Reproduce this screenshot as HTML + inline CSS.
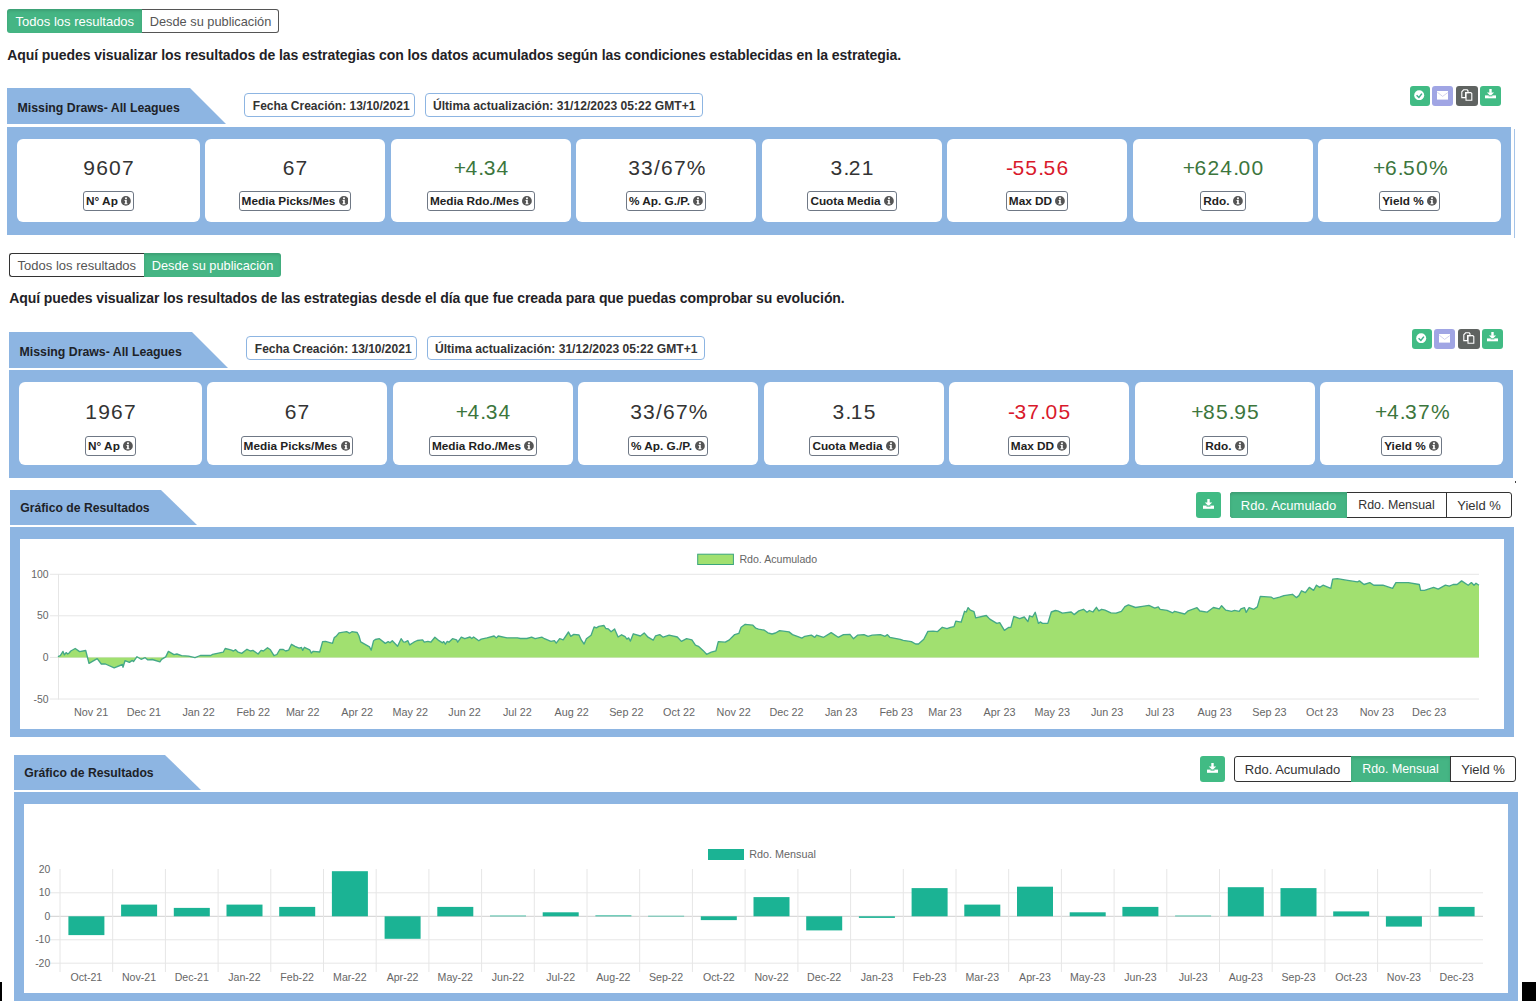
<!DOCTYPE html><html><head><meta charset="utf-8"><style>
html,body{margin:0;padding:0;background:#fff;}
body{width:1536px;height:1001px;overflow:hidden;position:relative;font-family:"Liberation Sans", sans-serif;}
.t{position:absolute;white-space:nowrap;}
.b{position:absolute;}
.lab{position:absolute;text-align:center;height:20px;}
.lab span{display:inline-block;border:1px solid #6f7885;border-radius:3px;height:19.5px;box-sizing:border-box;padding:1px 2px 0 2px;font-size:11.8px;line-height:17.5px;font-weight:700;color:#222;white-space:nowrap;}
.lab i{display:inline-block;width:9.8px;height:9.8px;border-radius:50%;background:#555;vertical-align:-1px;position:relative;}
.lab i:before{content:"";position:absolute;left:4.1px;top:4.1px;width:1.7px;height:3.6px;background:#fff;}
.lab i:after{content:"";position:absolute;left:4.05px;top:1.6px;width:1.8px;height:1.8px;border-radius:50%;background:#fff;}

</style></head><body>
<div class="b" style="left:7px;top:9px;width:135px;height:24px;background:#45b584;border-radius:3px 0 0 3px;box-shadow:inset 0 2px 3px rgba(0,0,0,0.12);"></div>
<div class="b" style="left:142px;top:9px;width:137px;height:24px;background:#fff;border:1px solid #555;border-left:none;border-radius:0 3px 3px 0;box-sizing:border-box;"></div>
<div class="t" style="left:15.60px;top:15.40px;font-size:13px;line-height:13px;font-weight:400;color:#fff;">Todos los resultados</div>
<div class="t" style="left:149.70px;top:15.56px;font-size:12.8px;line-height:12.8px;font-weight:400;color:#555;">Desde su publicación</div>
<div class="t" style="left:7.20px;top:47.65px;font-size:14px;line-height:14px;font-weight:700;color:#1f2226;letter-spacing:-0.07px;">Aquí puedes visualizar los resultados de las estrategias con los datos acumulados según las condiciones establecidas en la estrategia.</div>
<svg class="b" style="left:7px;top:88px" width="219" height="36"><polygon points="0,0 183,0 219,36 0,36" fill="#8db5e2"/></svg>
<div class="t" style="left:17.60px;top:101.59px;font-size:12.3px;line-height:12.3px;font-weight:700;color:#1d2228;">Missing Draws- All Leagues</div>
<div class="b" style="left:244px;top:93px;width:171px;height:24px;border:1px solid #8db5e2;border-radius:4px;box-sizing:border-box;background:#fff;"></div>
<div class="t" style="left:252.80px;top:99.74px;font-size:12px;line-height:12px;font-weight:700;color:#333;">Fecha Creación: 13/10/2021</div>
<div class="b" style="left:425px;top:93px;width:278px;height:24px;border:1px solid #8db5e2;border-radius:4px;box-sizing:border-box;background:#fff;"></div>
<div class="t" style="left:433.00px;top:99.66px;font-size:12.1px;line-height:12.1px;font-weight:700;color:#333;">Última actualización: 31/12/2023 05:22 GMT+1</div>
<div class="b" style="left:1409.6px;top:86px;width:20px;height:20px;background:#41bb84;border-radius:3px;"></div>
<div class="b" style="left:1432.2px;top:86px;width:21px;height:20px;background:#a0a5e4;border-radius:3px;"></div>
<div class="b" style="left:1456.1px;top:86px;width:21.5px;height:20px;background:#5f6361;border-radius:3px;"></div>
<div class="b" style="left:1479.9px;top:86px;width:21px;height:20px;background:#41bb84;border-radius:3px;"></div>
<svg class="b" style="left:1414.4px;top:89.8px" width="10.4" height="10.4" viewBox="0 0 10.4 10.4"><circle cx="5.2" cy="5.2" r="5.0" fill="#fff"/><polyline points="2.6,5.3 4.9,7.5 7.9,3.6" fill="none" stroke="#3fae8a" stroke-width="1.5"/></svg>
<svg class="b" style="left:1436.9px;top:91.2px" width="11.5" height="8.6" viewBox="0 0 11.5 8.6"><rect x="0" y="0" width="11.5" height="8.6" fill="#fff"/><polyline points="0.3,1.2 5.6,5.4 10.8,1.6" fill="none" stroke="#c8c6e8" stroke-width="0.8"/></svg>
<svg class="b" style="left:1461.4px;top:88.8px" width="12" height="12" viewBox="0 0 12 12"><path d="M2.6,0.8 L6.2,0.8 L7,1.8 L7,3.6 L4.6,3.6 L4.6,8.6 L0.8,8.6 L0.8,2.8 Z" fill="none" stroke="#fff" stroke-width="1.1"/><path d="M5,3.6 L9.8,3.6 L10.8,4.6 L10.8,11.3 L5,11.3 Z" fill="none" stroke="#fff" stroke-width="1.1"/></svg>
<svg class="b" style="left:1484.9px;top:89.3px" width="11" height="10" viewBox="0 0 11 10"><rect x="4.3" y="0" width="2.4" height="3.8" fill="#fff"/><polygon points="1.9,3.4 9.1,3.4 5.5,6.9" fill="#fff"/><rect x="0" y="6.4" width="11" height="2.9" fill="#fff"/><rect x="3.6" y="6.4" width="3.8" height="0.9" fill="#41bb84"/></svg>
<div class="b" style="left:7px;top:127px;width:1504px;height:108px;background:#8db5e2;"></div>
<div class="b" style="left:17px;top:139px;width:183px;height:83px;background:#fff;border-radius:6px;"></div>
<div class="t" style="left:28.50px;top:156.82px;font-size:21px;line-height:21px;font-weight:400;color:#333;width:160px;text-align:center;letter-spacing:1.2px;text-indent:1.2px;">9607</div>
<div class="lab" style="left:28.5px;top:191px;width:160px;"><span>N° Ap <svg width="9.8" height="9.8" viewBox="0 0 10 10" style="vertical-align:-1px"><circle cx="5" cy="5" r="5" fill="#555"/><circle cx="5.1" cy="2.4" r="1.05" fill="#fff"/><path d="M3.6,4.1 H5.9 V7.4 H6.6 V8.4 H3.5 V7.4 H4.2 V5.0 H3.6 Z" fill="#fff"/></svg></span></div>
<div class="b" style="left:205px;top:139px;width:180px;height:83px;background:#fff;border-radius:6px;"></div>
<div class="t" style="left:215.00px;top:156.82px;font-size:21px;line-height:21px;font-weight:400;color:#333;width:160px;text-align:center;letter-spacing:1.2px;text-indent:1.2px;">67</div>
<div class="lab" style="left:215.0px;top:191px;width:160px;"><span>Media Picks/Mes <svg width="9.8" height="9.8" viewBox="0 0 10 10" style="vertical-align:-1px"><circle cx="5" cy="5" r="5" fill="#555"/><circle cx="5.1" cy="2.4" r="1.05" fill="#fff"/><path d="M3.6,4.1 H5.9 V7.4 H6.6 V8.4 H3.5 V7.4 H4.2 V5.0 H3.6 Z" fill="#fff"/></svg></span></div>
<div class="b" style="left:391px;top:139px;width:180px;height:83px;background:#fff;border-radius:6px;"></div>
<div class="t" style="left:401.00px;top:156.82px;font-size:21px;line-height:21px;font-weight:400;color:#3c763d;width:160px;text-align:center;letter-spacing:1.2px;text-indent:1.2px;"><span style="letter-spacing:-0.5px">+</span>4<span style="letter-spacing:-0.5px">.</span>34</div>
<div class="lab" style="left:401.0px;top:191px;width:160px;"><span>Media Rdo./Mes <svg width="9.8" height="9.8" viewBox="0 0 10 10" style="vertical-align:-1px"><circle cx="5" cy="5" r="5" fill="#555"/><circle cx="5.1" cy="2.4" r="1.05" fill="#fff"/><path d="M3.6,4.1 H5.9 V7.4 H6.6 V8.4 H3.5 V7.4 H4.2 V5.0 H3.6 Z" fill="#fff"/></svg></span></div>
<div class="b" style="left:576px;top:139px;width:180px;height:83px;background:#fff;border-radius:6px;"></div>
<div class="t" style="left:586.00px;top:156.82px;font-size:21px;line-height:21px;font-weight:400;color:#333;width:160px;text-align:center;letter-spacing:1.2px;text-indent:1.2px;">33/67<span style="letter-spacing:-0.5px">%</span></div>
<div class="lab" style="left:586.0px;top:191px;width:160px;"><span>% Ap. G./P. <svg width="9.8" height="9.8" viewBox="0 0 10 10" style="vertical-align:-1px"><circle cx="5" cy="5" r="5" fill="#555"/><circle cx="5.1" cy="2.4" r="1.05" fill="#fff"/><path d="M3.6,4.1 H5.9 V7.4 H6.6 V8.4 H3.5 V7.4 H4.2 V5.0 H3.6 Z" fill="#fff"/></svg></span></div>
<div class="b" style="left:762px;top:139px;width:180px;height:83px;background:#fff;border-radius:6px;"></div>
<div class="t" style="left:772.00px;top:156.82px;font-size:21px;line-height:21px;font-weight:400;color:#333;width:160px;text-align:center;letter-spacing:1.2px;text-indent:1.2px;">3<span style="letter-spacing:-0.5px">.</span>21</div>
<div class="lab" style="left:772.0px;top:191px;width:160px;"><span>Cuota Media <svg width="9.8" height="9.8" viewBox="0 0 10 10" style="vertical-align:-1px"><circle cx="5" cy="5" r="5" fill="#555"/><circle cx="5.1" cy="2.4" r="1.05" fill="#fff"/><path d="M3.6,4.1 H5.9 V7.4 H6.6 V8.4 H3.5 V7.4 H4.2 V5.0 H3.6 Z" fill="#fff"/></svg></span></div>
<div class="b" style="left:947px;top:139px;width:180px;height:83px;background:#fff;border-radius:6px;"></div>
<div class="t" style="left:957.00px;top:156.82px;font-size:21px;line-height:21px;font-weight:400;color:#d9192b;width:160px;text-align:center;letter-spacing:1.2px;text-indent:1.2px;"><span style="letter-spacing:-0.5px">-</span>55<span style="letter-spacing:-0.5px">.</span>56</div>
<div class="lab" style="left:957.0px;top:191px;width:160px;"><span>Max DD <svg width="9.8" height="9.8" viewBox="0 0 10 10" style="vertical-align:-1px"><circle cx="5" cy="5" r="5" fill="#555"/><circle cx="5.1" cy="2.4" r="1.05" fill="#fff"/><path d="M3.6,4.1 H5.9 V7.4 H6.6 V8.4 H3.5 V7.4 H4.2 V5.0 H3.6 Z" fill="#fff"/></svg></span></div>
<div class="b" style="left:1133px;top:139px;width:180px;height:83px;background:#fff;border-radius:6px;"></div>
<div class="t" style="left:1143.00px;top:156.82px;font-size:21px;line-height:21px;font-weight:400;color:#3c763d;width:160px;text-align:center;letter-spacing:1.2px;text-indent:1.2px;"><span style="letter-spacing:-0.5px">+</span>624<span style="letter-spacing:-0.5px">.</span>00</div>
<div class="lab" style="left:1143.0px;top:191px;width:160px;"><span>Rdo. <svg width="9.8" height="9.8" viewBox="0 0 10 10" style="vertical-align:-1px"><circle cx="5" cy="5" r="5" fill="#555"/><circle cx="5.1" cy="2.4" r="1.05" fill="#fff"/><path d="M3.6,4.1 H5.9 V7.4 H6.6 V8.4 H3.5 V7.4 H4.2 V5.0 H3.6 Z" fill="#fff"/></svg></span></div>
<div class="b" style="left:1318px;top:139px;width:183px;height:83px;background:#fff;border-radius:6px;"></div>
<div class="t" style="left:1329.50px;top:156.82px;font-size:21px;line-height:21px;font-weight:400;color:#3c763d;width:160px;text-align:center;letter-spacing:1.2px;text-indent:1.2px;"><span style="letter-spacing:-0.5px">+</span>6<span style="letter-spacing:-0.5px">.</span>50<span style="letter-spacing:-0.5px">%</span></div>
<div class="lab" style="left:1329.5px;top:191px;width:160px;"><span>Yield % <svg width="9.8" height="9.8" viewBox="0 0 10 10" style="vertical-align:-1px"><circle cx="5" cy="5" r="5" fill="#555"/><circle cx="5.1" cy="2.4" r="1.05" fill="#fff"/><path d="M3.6,4.1 H5.9 V7.4 H6.6 V8.4 H3.5 V7.4 H4.2 V5.0 H3.6 Z" fill="#fff"/></svg></span></div>
<div class="b" style="left:1514px;top:129px;width:1px;height:108.5px;background:#a5c4e8;"></div>
<div class="b" style="left:9px;top:253px;width:135px;height:24px;background:#fff;border:1px solid #333;border-right:none;border-radius:3px 0 0 3px;box-sizing:border-box;"></div>
<div class="b" style="left:144px;top:253px;width:137px;height:24px;background:#45b584;border-radius:0 3px 3px 0;box-shadow:inset 0 2px 3px rgba(0,0,0,0.12);"></div>
<div class="t" style="left:17.60px;top:259.40px;font-size:13px;line-height:13px;font-weight:400;color:#555;">Todos los resultados</div>
<div class="t" style="left:151.70px;top:259.56px;font-size:12.8px;line-height:12.8px;font-weight:400;color:#fff;">Desde su publicación</div>
<div class="t" style="left:9.20px;top:290.65px;font-size:14px;line-height:14px;font-weight:700;color:#1f2226;letter-spacing:-0.07px;">Aquí puedes visualizar los resultados de las estrategias desde el día que fue creada para que puedas comprobar su evolución.</div>
<svg class="b" style="left:9px;top:332px" width="219" height="36"><polygon points="0,0 183,0 219,36 0,36" fill="#8db5e2"/></svg>
<div class="t" style="left:19.60px;top:345.59px;font-size:12.3px;line-height:12.3px;font-weight:700;color:#1d2228;">Missing Draws- All Leagues</div>
<div class="b" style="left:246px;top:336px;width:171px;height:24px;border:1px solid #8db5e2;border-radius:4px;box-sizing:border-box;background:#fff;"></div>
<div class="t" style="left:254.80px;top:342.74px;font-size:12px;line-height:12px;font-weight:700;color:#333;">Fecha Creación: 13/10/2021</div>
<div class="b" style="left:427px;top:336px;width:278px;height:24px;border:1px solid #8db5e2;border-radius:4px;box-sizing:border-box;background:#fff;"></div>
<div class="t" style="left:435.00px;top:342.66px;font-size:12.1px;line-height:12.1px;font-weight:700;color:#333;">Última actualización: 31/12/2023 05:22 GMT+1</div>
<div class="b" style="left:1411.6px;top:329px;width:20px;height:20px;background:#41bb84;border-radius:3px;"></div>
<div class="b" style="left:1434.2px;top:329px;width:21px;height:20px;background:#a0a5e4;border-radius:3px;"></div>
<div class="b" style="left:1458.1px;top:329px;width:21.5px;height:20px;background:#5f6361;border-radius:3px;"></div>
<div class="b" style="left:1481.9px;top:329px;width:21px;height:20px;background:#41bb84;border-radius:3px;"></div>
<svg class="b" style="left:1416.4px;top:332.8px" width="10.4" height="10.4" viewBox="0 0 10.4 10.4"><circle cx="5.2" cy="5.2" r="5.0" fill="#fff"/><polyline points="2.6,5.3 4.9,7.5 7.9,3.6" fill="none" stroke="#3fae8a" stroke-width="1.5"/></svg>
<svg class="b" style="left:1438.9px;top:334.2px" width="11.5" height="8.6" viewBox="0 0 11.5 8.6"><rect x="0" y="0" width="11.5" height="8.6" fill="#fff"/><polyline points="0.3,1.2 5.6,5.4 10.8,1.6" fill="none" stroke="#c8c6e8" stroke-width="0.8"/></svg>
<svg class="b" style="left:1463.4px;top:331.8px" width="12" height="12" viewBox="0 0 12 12"><path d="M2.6,0.8 L6.2,0.8 L7,1.8 L7,3.6 L4.6,3.6 L4.6,8.6 L0.8,8.6 L0.8,2.8 Z" fill="none" stroke="#fff" stroke-width="1.1"/><path d="M5,3.6 L9.8,3.6 L10.8,4.6 L10.8,11.3 L5,11.3 Z" fill="none" stroke="#fff" stroke-width="1.1"/></svg>
<svg class="b" style="left:1486.9px;top:332.3px" width="11" height="10" viewBox="0 0 11 10"><rect x="4.3" y="0" width="2.4" height="3.8" fill="#fff"/><polygon points="1.9,3.4 9.1,3.4 5.5,6.9" fill="#fff"/><rect x="0" y="6.4" width="11" height="2.9" fill="#fff"/><rect x="3.6" y="6.4" width="3.8" height="0.9" fill="#41bb84"/></svg>
<div class="b" style="left:9px;top:370px;width:1504px;height:108px;background:#8db5e2;"></div>
<div class="b" style="left:19px;top:382px;width:183px;height:83px;background:#fff;border-radius:6px;"></div>
<div class="t" style="left:30.50px;top:400.82px;font-size:21px;line-height:21px;font-weight:400;color:#333;width:160px;text-align:center;letter-spacing:1.2px;text-indent:1.2px;">1967</div>
<div class="lab" style="left:30.5px;top:436px;width:160px;"><span>N° Ap <svg width="9.8" height="9.8" viewBox="0 0 10 10" style="vertical-align:-1px"><circle cx="5" cy="5" r="5" fill="#555"/><circle cx="5.1" cy="2.4" r="1.05" fill="#fff"/><path d="M3.6,4.1 H5.9 V7.4 H6.6 V8.4 H3.5 V7.4 H4.2 V5.0 H3.6 Z" fill="#fff"/></svg></span></div>
<div class="b" style="left:207px;top:382px;width:180px;height:83px;background:#fff;border-radius:6px;"></div>
<div class="t" style="left:217.00px;top:400.82px;font-size:21px;line-height:21px;font-weight:400;color:#333;width:160px;text-align:center;letter-spacing:1.2px;text-indent:1.2px;">67</div>
<div class="lab" style="left:217.0px;top:436px;width:160px;"><span>Media Picks/Mes <svg width="9.8" height="9.8" viewBox="0 0 10 10" style="vertical-align:-1px"><circle cx="5" cy="5" r="5" fill="#555"/><circle cx="5.1" cy="2.4" r="1.05" fill="#fff"/><path d="M3.6,4.1 H5.9 V7.4 H6.6 V8.4 H3.5 V7.4 H4.2 V5.0 H3.6 Z" fill="#fff"/></svg></span></div>
<div class="b" style="left:393px;top:382px;width:180px;height:83px;background:#fff;border-radius:6px;"></div>
<div class="t" style="left:403.00px;top:400.82px;font-size:21px;line-height:21px;font-weight:400;color:#3c763d;width:160px;text-align:center;letter-spacing:1.2px;text-indent:1.2px;"><span style="letter-spacing:-0.5px">+</span>4<span style="letter-spacing:-0.5px">.</span>34</div>
<div class="lab" style="left:403.0px;top:436px;width:160px;"><span>Media Rdo./Mes <svg width="9.8" height="9.8" viewBox="0 0 10 10" style="vertical-align:-1px"><circle cx="5" cy="5" r="5" fill="#555"/><circle cx="5.1" cy="2.4" r="1.05" fill="#fff"/><path d="M3.6,4.1 H5.9 V7.4 H6.6 V8.4 H3.5 V7.4 H4.2 V5.0 H3.6 Z" fill="#fff"/></svg></span></div>
<div class="b" style="left:578px;top:382px;width:180px;height:83px;background:#fff;border-radius:6px;"></div>
<div class="t" style="left:588.00px;top:400.82px;font-size:21px;line-height:21px;font-weight:400;color:#333;width:160px;text-align:center;letter-spacing:1.2px;text-indent:1.2px;">33/67<span style="letter-spacing:-0.5px">%</span></div>
<div class="lab" style="left:588.0px;top:436px;width:160px;"><span>% Ap. G./P. <svg width="9.8" height="9.8" viewBox="0 0 10 10" style="vertical-align:-1px"><circle cx="5" cy="5" r="5" fill="#555"/><circle cx="5.1" cy="2.4" r="1.05" fill="#fff"/><path d="M3.6,4.1 H5.9 V7.4 H6.6 V8.4 H3.5 V7.4 H4.2 V5.0 H3.6 Z" fill="#fff"/></svg></span></div>
<div class="b" style="left:764px;top:382px;width:180px;height:83px;background:#fff;border-radius:6px;"></div>
<div class="t" style="left:774.00px;top:400.82px;font-size:21px;line-height:21px;font-weight:400;color:#333;width:160px;text-align:center;letter-spacing:1.2px;text-indent:1.2px;">3<span style="letter-spacing:-0.5px">.</span>15</div>
<div class="lab" style="left:774.0px;top:436px;width:160px;"><span>Cuota Media <svg width="9.8" height="9.8" viewBox="0 0 10 10" style="vertical-align:-1px"><circle cx="5" cy="5" r="5" fill="#555"/><circle cx="5.1" cy="2.4" r="1.05" fill="#fff"/><path d="M3.6,4.1 H5.9 V7.4 H6.6 V8.4 H3.5 V7.4 H4.2 V5.0 H3.6 Z" fill="#fff"/></svg></span></div>
<div class="b" style="left:949px;top:382px;width:180px;height:83px;background:#fff;border-radius:6px;"></div>
<div class="t" style="left:959.00px;top:400.82px;font-size:21px;line-height:21px;font-weight:400;color:#d9192b;width:160px;text-align:center;letter-spacing:1.2px;text-indent:1.2px;"><span style="letter-spacing:-0.5px">-</span>37<span style="letter-spacing:-0.5px">.</span>05</div>
<div class="lab" style="left:959.0px;top:436px;width:160px;"><span>Max DD <svg width="9.8" height="9.8" viewBox="0 0 10 10" style="vertical-align:-1px"><circle cx="5" cy="5" r="5" fill="#555"/><circle cx="5.1" cy="2.4" r="1.05" fill="#fff"/><path d="M3.6,4.1 H5.9 V7.4 H6.6 V8.4 H3.5 V7.4 H4.2 V5.0 H3.6 Z" fill="#fff"/></svg></span></div>
<div class="b" style="left:1135px;top:382px;width:180px;height:83px;background:#fff;border-radius:6px;"></div>
<div class="t" style="left:1145.00px;top:400.82px;font-size:21px;line-height:21px;font-weight:400;color:#3c763d;width:160px;text-align:center;letter-spacing:1.2px;text-indent:1.2px;"><span style="letter-spacing:-0.5px">+</span>85<span style="letter-spacing:-0.5px">.</span>95</div>
<div class="lab" style="left:1145.0px;top:436px;width:160px;"><span>Rdo. <svg width="9.8" height="9.8" viewBox="0 0 10 10" style="vertical-align:-1px"><circle cx="5" cy="5" r="5" fill="#555"/><circle cx="5.1" cy="2.4" r="1.05" fill="#fff"/><path d="M3.6,4.1 H5.9 V7.4 H6.6 V8.4 H3.5 V7.4 H4.2 V5.0 H3.6 Z" fill="#fff"/></svg></span></div>
<div class="b" style="left:1320px;top:382px;width:183px;height:83px;background:#fff;border-radius:6px;"></div>
<div class="t" style="left:1331.50px;top:400.82px;font-size:21px;line-height:21px;font-weight:400;color:#3c763d;width:160px;text-align:center;letter-spacing:1.2px;text-indent:1.2px;"><span style="letter-spacing:-0.5px">+</span>4<span style="letter-spacing:-0.5px">.</span>37<span style="letter-spacing:-0.5px">%</span></div>
<div class="lab" style="left:1331.5px;top:436px;width:160px;"><span>Yield % <svg width="9.8" height="9.8" viewBox="0 0 10 10" style="vertical-align:-1px"><circle cx="5" cy="5" r="5" fill="#555"/><circle cx="5.1" cy="2.4" r="1.05" fill="#fff"/><path d="M3.6,4.1 H5.9 V7.4 H6.6 V8.4 H3.5 V7.4 H4.2 V5.0 H3.6 Z" fill="#fff"/></svg></span></div>
<svg class="b" style="left:9.5px;top:490px" width="187" height="35"><polygon points="0,0 151,0 187,35 0,35" fill="#8db5e2"/></svg>
<div class="t" style="left:20.30px;top:502.07px;font-size:12.2px;line-height:12.2px;font-weight:700;color:#1d2228;">Gráfico de Resultados</div>
<div class="b" style="left:1196px;top:492px;width:25px;height:25.5px;background:#41bb84;border-radius:3px;"></div>
<svg class="b" style="left:1203.3px;top:498.8px" width="11" height="10" viewBox="0 0 11 10"><rect x="4.3" y="0" width="2.4" height="4" fill="#fff"/><polygon points="1.8,3.6 9.2,3.6 5.5,7" fill="#fff"/><rect x="0" y="6.6" width="11" height="3.2" fill="#fff"/><rect x="3.5" y="6.6" width="4" height="1" fill="#41bb84"/></svg>
<div class="b" style="left:1230px;top:492px;width:282px;height:25.5px;border:1px solid #333;border-radius:3px;box-sizing:border-box;background:#fff;"></div>
<div class="b" style="left:1230px;top:492px;width:117px;height:25.5px;background:#45b584;border-radius:3px 0 0 3px;box-shadow:inset 0 2px 3px rgba(0,0,0,0.12);"></div>
<div class="t" style="left:1230.00px;top:498.60px;font-size:13px;line-height:13px;font-weight:400;color:#fff;width:117px;text-align:center;">Rdo. Acumulado</div>
<div class="t" style="left:1347.00px;top:499.10px;font-size:12.4px;line-height:12.4px;font-weight:400;color:#333;width:99px;text-align:center;">Rdo. Mensual</div>
<div class="b" style="left:1446px;top:492px;width:1px;height:25.5px;background:#333;"></div>
<div class="t" style="left:1446.00px;top:498.60px;font-size:13px;line-height:13px;font-weight:400;color:#333;width:66px;text-align:center;">Yield %</div>
<div class="b" style="left:9.5px;top:527px;width:1504.5px;height:210px;background:#8db5e2;"></div>
<div class="b" style="left:20px;top:539px;width:1484px;height:190px;background:#fff;"></div>
<svg class="b" style="left:0;top:0" width="1536" height="1001">
<line x1="50" y1="574.3" x2="1479" y2="574.3" stroke="#e6e6e6" stroke-width="1"/>
<line x1="50" y1="615.8" x2="1479" y2="615.8" stroke="#e6e6e6" stroke-width="1"/>
<line x1="50" y1="657.4" x2="1479" y2="657.4" stroke="#e6e6e6" stroke-width="1"/>
<line x1="50" y1="699.0" x2="1479" y2="699.0" stroke="#e6e6e6" stroke-width="1"/>
<line x1="58.5" y1="574" x2="58.5" y2="699.5" stroke="#e6e6e6" stroke-width="1"/>
<polygon points="58.5,657.4 57.9,656.7 60.3,655.7 63.0,651.4 64.4,654.9 66.1,652.6 67.7,654.0 69.1,653.0 70.8,651.0 75.2,648.5 79.6,651.6 85.7,650.5 89.0,663.4 97.2,658.7 101.3,664.0 105.4,664.0 114.2,667.8 122.4,664.5 123.0,667.2 125.0,660.7 129.4,662.4 132.3,660.4 133.5,661.6 137.0,656.7 141.1,659.3 145.2,657.7 147.6,659.8 152.3,659.5 159.9,661.8 161.6,659.3 165.7,656.9 168.4,651.4 174.0,654.6 176.9,654.0 181.6,655.7 188.6,656.1 195.0,657.7 200.3,655.5 210.9,655.5 212.6,654.3 223.2,652.2 225.2,648.5 230.8,649.9 233.5,651.0 235.6,649.6 237.6,651.8 241.7,653.4 247.0,649.3 250.5,651.0 252.9,650.4 258.1,654.0 261.1,650.4 263.4,651.0 267.5,647.7 270.4,649.8 274.0,655.7 276.9,654.5 279.8,649.5 283.3,649.5 285.7,651.0 288.6,650.2 291.5,644.3 295.0,646.3 299.1,648.1 301.5,647.5 302.7,650.4 304.4,647.3 309.7,649.8 311.4,653.1 313.2,651.3 319.7,652.0 322.6,641.6 325.5,641.4 332.5,643.4 334.3,637.5 336.1,636.4 339.0,632.9 346.6,631.7 349.5,633.2 351.9,631.7 357.2,632.5 358.9,635.8 360.7,641.9 369.5,646.9 371.2,650.2 373.6,640.7 375.3,639.5 379.4,638.7 385.3,643.4 388.2,641.6 390.0,642.8 392.3,640.7 397.6,646.3 401.1,638.7 403.4,641.9 405.0,642.2 407.9,640.7 409.7,644.9 413.8,642.2 417.3,640.5 422.6,639.9 424.3,642.2 427.9,641.4 430.8,642.2 434.9,637.2 439.0,640.7 442.5,642.8 443.7,641.6 445.4,644.2 447.2,641.4 448.9,642.2 452.5,638.7 456.6,639.9 457.7,642.2 461.3,637.2 464.8,638.7 470.0,637.0 471.8,638.5 473.6,637.0 478.8,640.7 481.2,639.1 487.0,637.8 494.1,636.0 496.4,637.9 498.2,636.0 507.0,637.8 517.5,637.8 520.4,638.5 526.9,638.5 531.6,637.2 535.1,638.7 542.1,637.2 544.5,638.7 550.9,641.4 554.4,640.7 556.2,643.2 559.7,638.7 563.2,639.9 568.5,632.0 570.8,636.4 573.8,634.4 579.0,635.0 581.4,640.2 584.1,644.0 586.4,638.7 591.1,635.2 594.1,627.0 596.4,627.8 598.8,626.4 604.0,625.5 605.8,628.5 608.1,628.8 611.1,631.7 614.6,629.0 618.1,637.0 621.6,634.8 625.1,636.7 626.9,639.1 628.6,637.9 630.4,641.1 633.3,633.8 640.4,636.0 644.2,632.9 648.0,637.2 653.2,640.2 655.6,635.8 659.7,634.6 663.2,637.2 669.1,635.2 677.3,637.0 681.4,641.4 686.6,638.7 691.9,639.9 695.4,645.2 698.4,646.3 703.0,650.4 706.6,654.3 711.3,652.2 715.9,650.8 718.3,641.6 725.3,642.2 729.4,639.9 731.2,637.9 734.7,634.6 738.8,633.4 741.1,627.3 745.2,624.3 752.9,625.2 755.8,628.2 758.5,629.1 764.4,630.2 767.9,632.8 772.0,634.0 775.5,633.0 779.6,630.7 789.0,631.9 792.5,634.6 796.6,636.1 801.9,638.1 804.8,636.3 811.3,635.2 814.8,637.3 816.5,635.2 823.6,637.3 831.2,632.6 838.2,637.3 843.5,634.6 849.9,634.3 853.4,638.7 857.5,635.2 864.0,634.6 868.1,636.3 872.2,635.2 880.4,634.6 885.1,636.3 887.4,634.6 889.8,637.3 900.3,639.3 903.2,640.4 911.4,641.6 915.6,644.0 918.5,644.0 923.8,639.3 927.9,631.4 933.1,631.1 937.6,631.6 942.3,627.3 947.0,628.7 950.5,627.3 954.0,626.6 955.8,621.1 961.1,622.2 964.6,611.3 966.3,612.0 968.1,607.6 970.4,610.2 974.0,611.7 975.7,617.9 986.3,615.5 989.8,619.1 996.8,623.4 999.7,622.6 1004.4,630.4 1008.5,627.5 1010.9,627.3 1013.8,616.4 1019.7,618.7 1024.3,617.0 1027.9,621.6 1029.6,615.8 1032.5,617.0 1035.2,612.3 1038.4,623.4 1040.2,621.9 1042.5,623.4 1047.8,623.4 1051.3,612.0 1055.4,610.5 1057.7,610.9 1062.4,613.2 1071.2,612.0 1074.1,614.6 1078.8,610.9 1083.5,609.3 1087.0,612.3 1089.4,610.5 1092.9,612.0 1096.4,607.3 1098.8,610.9 1101.7,609.3 1105.0,610.1 1110.9,612.8 1116.1,613.1 1121.4,611.3 1124.9,606.6 1128.4,604.9 1135.5,607.5 1142.5,606.3 1148.9,605.4 1154.8,608.1 1158.3,606.9 1160.1,609.3 1167.1,610.4 1172.7,612.8 1174.7,611.3 1184.7,614.0 1188.2,610.8 1197.0,607.7 1199.9,611.0 1207.0,612.2 1213.4,607.5 1219.3,608.9 1221.6,605.7 1225.7,610.1 1231.6,611.3 1234.5,610.4 1239.2,611.3 1240.9,608.9 1244.5,607.7 1246.2,612.4 1249.1,607.7 1253.8,609.3 1257.3,606.9 1260.3,596.4 1271.4,597.2 1273.8,598.7 1279.6,597.2 1283.9,595.6 1292.4,594.3 1296.3,597.6 1298.9,595.6 1301.5,590.8 1305.4,592.6 1309.3,587.4 1313.6,590.4 1316.5,585.2 1319.7,587.4 1323.0,585.2 1330.8,588.4 1332.7,579.1 1337.3,578.7 1347.7,580.4 1357.5,581.9 1359.4,580.9 1364.0,584.5 1369.8,582.6 1373.8,585.2 1382.9,585.2 1392.6,588.4 1395.9,582.6 1408.3,582.6 1419.3,584.5 1420.6,590.4 1424.5,590.4 1433.6,587.4 1438.2,589.1 1445.4,585.2 1449.3,586.1 1453.2,584.5 1457.1,584.5 1461.6,580.9 1468.2,585.2 1471.4,582.6 1474.0,585.2 1476.0,583.2 1479.0,585.2 1479,657.4" fill="#a1e070"/>
<polyline points="57.9,656.7 60.3,655.7 63.0,651.4 64.4,654.9 66.1,652.6 67.7,654.0 69.1,653.0 70.8,651.0 75.2,648.5 79.6,651.6 85.7,650.5 89.0,663.4 97.2,658.7 101.3,664.0 105.4,664.0 114.2,667.8 122.4,664.5 123.0,667.2 125.0,660.7 129.4,662.4 132.3,660.4 133.5,661.6 137.0,656.7 141.1,659.3 145.2,657.7 147.6,659.8 152.3,659.5 159.9,661.8 161.6,659.3 165.7,656.9 168.4,651.4 174.0,654.6 176.9,654.0 181.6,655.7 188.6,656.1 195.0,657.7 200.3,655.5 210.9,655.5 212.6,654.3 223.2,652.2 225.2,648.5 230.8,649.9 233.5,651.0 235.6,649.6 237.6,651.8 241.7,653.4 247.0,649.3 250.5,651.0 252.9,650.4 258.1,654.0 261.1,650.4 263.4,651.0 267.5,647.7 270.4,649.8 274.0,655.7 276.9,654.5 279.8,649.5 283.3,649.5 285.7,651.0 288.6,650.2 291.5,644.3 295.0,646.3 299.1,648.1 301.5,647.5 302.7,650.4 304.4,647.3 309.7,649.8 311.4,653.1 313.2,651.3 319.7,652.0 322.6,641.6 325.5,641.4 332.5,643.4 334.3,637.5 336.1,636.4 339.0,632.9 346.6,631.7 349.5,633.2 351.9,631.7 357.2,632.5 358.9,635.8 360.7,641.9 369.5,646.9 371.2,650.2 373.6,640.7 375.3,639.5 379.4,638.7 385.3,643.4 388.2,641.6 390.0,642.8 392.3,640.7 397.6,646.3 401.1,638.7 403.4,641.9 405.0,642.2 407.9,640.7 409.7,644.9 413.8,642.2 417.3,640.5 422.6,639.9 424.3,642.2 427.9,641.4 430.8,642.2 434.9,637.2 439.0,640.7 442.5,642.8 443.7,641.6 445.4,644.2 447.2,641.4 448.9,642.2 452.5,638.7 456.6,639.9 457.7,642.2 461.3,637.2 464.8,638.7 470.0,637.0 471.8,638.5 473.6,637.0 478.8,640.7 481.2,639.1 487.0,637.8 494.1,636.0 496.4,637.9 498.2,636.0 507.0,637.8 517.5,637.8 520.4,638.5 526.9,638.5 531.6,637.2 535.1,638.7 542.1,637.2 544.5,638.7 550.9,641.4 554.4,640.7 556.2,643.2 559.7,638.7 563.2,639.9 568.5,632.0 570.8,636.4 573.8,634.4 579.0,635.0 581.4,640.2 584.1,644.0 586.4,638.7 591.1,635.2 594.1,627.0 596.4,627.8 598.8,626.4 604.0,625.5 605.8,628.5 608.1,628.8 611.1,631.7 614.6,629.0 618.1,637.0 621.6,634.8 625.1,636.7 626.9,639.1 628.6,637.9 630.4,641.1 633.3,633.8 640.4,636.0 644.2,632.9 648.0,637.2 653.2,640.2 655.6,635.8 659.7,634.6 663.2,637.2 669.1,635.2 677.3,637.0 681.4,641.4 686.6,638.7 691.9,639.9 695.4,645.2 698.4,646.3 703.0,650.4 706.6,654.3 711.3,652.2 715.9,650.8 718.3,641.6 725.3,642.2 729.4,639.9 731.2,637.9 734.7,634.6 738.8,633.4 741.1,627.3 745.2,624.3 752.9,625.2 755.8,628.2 758.5,629.1 764.4,630.2 767.9,632.8 772.0,634.0 775.5,633.0 779.6,630.7 789.0,631.9 792.5,634.6 796.6,636.1 801.9,638.1 804.8,636.3 811.3,635.2 814.8,637.3 816.5,635.2 823.6,637.3 831.2,632.6 838.2,637.3 843.5,634.6 849.9,634.3 853.4,638.7 857.5,635.2 864.0,634.6 868.1,636.3 872.2,635.2 880.4,634.6 885.1,636.3 887.4,634.6 889.8,637.3 900.3,639.3 903.2,640.4 911.4,641.6 915.6,644.0 918.5,644.0 923.8,639.3 927.9,631.4 933.1,631.1 937.6,631.6 942.3,627.3 947.0,628.7 950.5,627.3 954.0,626.6 955.8,621.1 961.1,622.2 964.6,611.3 966.3,612.0 968.1,607.6 970.4,610.2 974.0,611.7 975.7,617.9 986.3,615.5 989.8,619.1 996.8,623.4 999.7,622.6 1004.4,630.4 1008.5,627.5 1010.9,627.3 1013.8,616.4 1019.7,618.7 1024.3,617.0 1027.9,621.6 1029.6,615.8 1032.5,617.0 1035.2,612.3 1038.4,623.4 1040.2,621.9 1042.5,623.4 1047.8,623.4 1051.3,612.0 1055.4,610.5 1057.7,610.9 1062.4,613.2 1071.2,612.0 1074.1,614.6 1078.8,610.9 1083.5,609.3 1087.0,612.3 1089.4,610.5 1092.9,612.0 1096.4,607.3 1098.8,610.9 1101.7,609.3 1105.0,610.1 1110.9,612.8 1116.1,613.1 1121.4,611.3 1124.9,606.6 1128.4,604.9 1135.5,607.5 1142.5,606.3 1148.9,605.4 1154.8,608.1 1158.3,606.9 1160.1,609.3 1167.1,610.4 1172.7,612.8 1174.7,611.3 1184.7,614.0 1188.2,610.8 1197.0,607.7 1199.9,611.0 1207.0,612.2 1213.4,607.5 1219.3,608.9 1221.6,605.7 1225.7,610.1 1231.6,611.3 1234.5,610.4 1239.2,611.3 1240.9,608.9 1244.5,607.7 1246.2,612.4 1249.1,607.7 1253.8,609.3 1257.3,606.9 1260.3,596.4 1271.4,597.2 1273.8,598.7 1279.6,597.2 1283.9,595.6 1292.4,594.3 1296.3,597.6 1298.9,595.6 1301.5,590.8 1305.4,592.6 1309.3,587.4 1313.6,590.4 1316.5,585.2 1319.7,587.4 1323.0,585.2 1330.8,588.4 1332.7,579.1 1337.3,578.7 1347.7,580.4 1357.5,581.9 1359.4,580.9 1364.0,584.5 1369.8,582.6 1373.8,585.2 1382.9,585.2 1392.6,588.4 1395.9,582.6 1408.3,582.6 1419.3,584.5 1420.6,590.4 1424.5,590.4 1433.6,587.4 1438.2,589.1 1445.4,585.2 1449.3,586.1 1453.2,584.5 1457.1,584.5 1461.6,580.9 1468.2,585.2 1471.4,582.6 1474.0,585.2 1476.0,583.2 1479.0,585.2" fill="none" stroke="#44a887" stroke-width="1.35" stroke-linejoin="round"/>
<rect x="697.7" y="554.2" width="35.7" height="10.3" fill="#a1e070" stroke="#3aa57c" stroke-width="1"/>
</svg>
<div class="t" style="left:739.40px;top:553.83px;font-size:10.6px;line-height:10.6px;font-weight:400;color:#666;">Rdo. Acumulado</div>
<div class="t" style="left:0.00px;top:569.87px;font-size:10.4px;line-height:10.4px;font-weight:400;color:#666;width:48.6px;text-align:right;">100</div>
<div class="t" style="left:0.00px;top:611.43px;font-size:10.4px;line-height:10.4px;font-weight:400;color:#666;width:48.6px;text-align:right;">50</div>
<div class="t" style="left:0.00px;top:653.00px;font-size:10.4px;line-height:10.4px;font-weight:400;color:#666;width:48.6px;text-align:right;">0</div>
<div class="t" style="left:0.00px;top:694.56px;font-size:10.4px;line-height:10.4px;font-weight:400;color:#666;width:48.6px;text-align:right;">-50</div>
<div class="t" style="left:61.10px;top:707.26px;font-size:10.8px;line-height:10.8px;font-weight:400;color:#666;width:60px;text-align:center;">Nov 21</div>
<div class="t" style="left:113.90px;top:707.26px;font-size:10.8px;line-height:10.8px;font-weight:400;color:#666;width:60px;text-align:center;">Dec 21</div>
<div class="t" style="left:168.60px;top:707.26px;font-size:10.8px;line-height:10.8px;font-weight:400;color:#666;width:60px;text-align:center;">Jan 22</div>
<div class="t" style="left:223.30px;top:707.26px;font-size:10.8px;line-height:10.8px;font-weight:400;color:#666;width:60px;text-align:center;">Feb 22</div>
<div class="t" style="left:272.70px;top:707.26px;font-size:10.8px;line-height:10.8px;font-weight:400;color:#666;width:60px;text-align:center;">Mar 22</div>
<div class="t" style="left:327.10px;top:707.26px;font-size:10.8px;line-height:10.8px;font-weight:400;color:#666;width:60px;text-align:center;">Apr 22</div>
<div class="t" style="left:380.20px;top:707.26px;font-size:10.8px;line-height:10.8px;font-weight:400;color:#666;width:60px;text-align:center;">May 22</div>
<div class="t" style="left:434.50px;top:707.26px;font-size:10.8px;line-height:10.8px;font-weight:400;color:#666;width:60px;text-align:center;">Jun 22</div>
<div class="t" style="left:487.30px;top:707.26px;font-size:10.8px;line-height:10.8px;font-weight:400;color:#666;width:60px;text-align:center;">Jul 22</div>
<div class="t" style="left:541.60px;top:707.26px;font-size:10.8px;line-height:10.8px;font-weight:400;color:#666;width:60px;text-align:center;">Aug 22</div>
<div class="t" style="left:596.30px;top:707.26px;font-size:10.8px;line-height:10.8px;font-weight:400;color:#666;width:60px;text-align:center;">Sep 22</div>
<div class="t" style="left:649.00px;top:707.26px;font-size:10.8px;line-height:10.8px;font-weight:400;color:#666;width:60px;text-align:center;">Oct 22</div>
<div class="t" style="left:703.70px;top:707.26px;font-size:10.8px;line-height:10.8px;font-weight:400;color:#666;width:60px;text-align:center;">Nov 22</div>
<div class="t" style="left:756.50px;top:707.26px;font-size:10.8px;line-height:10.8px;font-weight:400;color:#666;width:60px;text-align:center;">Dec 22</div>
<div class="t" style="left:811.10px;top:707.26px;font-size:10.8px;line-height:10.8px;font-weight:400;color:#666;width:60px;text-align:center;">Jan 23</div>
<div class="t" style="left:866.20px;top:707.26px;font-size:10.8px;line-height:10.8px;font-weight:400;color:#666;width:60px;text-align:center;">Feb 23</div>
<div class="t" style="left:915.00px;top:707.26px;font-size:10.8px;line-height:10.8px;font-weight:400;color:#666;width:60px;text-align:center;">Mar 23</div>
<div class="t" style="left:969.50px;top:707.26px;font-size:10.8px;line-height:10.8px;font-weight:400;color:#666;width:60px;text-align:center;">Apr 23</div>
<div class="t" style="left:1022.30px;top:707.26px;font-size:10.8px;line-height:10.8px;font-weight:400;color:#666;width:60px;text-align:center;">May 23</div>
<div class="t" style="left:1077.10px;top:707.26px;font-size:10.8px;line-height:10.8px;font-weight:400;color:#666;width:60px;text-align:center;">Jun 23</div>
<div class="t" style="left:1129.80px;top:707.26px;font-size:10.8px;line-height:10.8px;font-weight:400;color:#666;width:60px;text-align:center;">Jul 23</div>
<div class="t" style="left:1184.60px;top:707.26px;font-size:10.8px;line-height:10.8px;font-weight:400;color:#666;width:60px;text-align:center;">Aug 23</div>
<div class="t" style="left:1239.40px;top:707.26px;font-size:10.8px;line-height:10.8px;font-weight:400;color:#666;width:60px;text-align:center;">Sep 23</div>
<div class="t" style="left:1292.00px;top:707.26px;font-size:10.8px;line-height:10.8px;font-weight:400;color:#666;width:60px;text-align:center;">Oct 23</div>
<div class="t" style="left:1346.80px;top:707.26px;font-size:10.8px;line-height:10.8px;font-weight:400;color:#666;width:60px;text-align:center;">Nov 23</div>
<div class="t" style="left:1399.20px;top:707.26px;font-size:10.8px;line-height:10.8px;font-weight:400;color:#666;width:60px;text-align:center;">Dec 23</div>
<svg class="b" style="left:13.5px;top:755px" width="187" height="35"><polygon points="0,0 151,0 187,35 0,35" fill="#8db5e2"/></svg>
<div class="t" style="left:24.30px;top:767.07px;font-size:12.2px;line-height:12.2px;font-weight:700;color:#1d2228;">Gráfico de Resultados</div>
<div class="b" style="left:1200px;top:756px;width:25px;height:25.5px;background:#41bb84;border-radius:3px;"></div>
<svg class="b" style="left:1207.3px;top:762.8px" width="11" height="10" viewBox="0 0 11 10"><rect x="4.3" y="0" width="2.4" height="4" fill="#fff"/><polygon points="1.8,3.6 9.2,3.6 5.5,7" fill="#fff"/><rect x="0" y="6.6" width="11" height="3.2" fill="#fff"/><rect x="3.5" y="6.6" width="4" height="1" fill="#41bb84"/></svg>
<div class="b" style="left:1234px;top:756px;width:282px;height:25.5px;border:1px solid #333;border-radius:3px;box-sizing:border-box;background:#fff;"></div>
<div class="t" style="left:1234.00px;top:762.60px;font-size:13px;line-height:13px;font-weight:400;color:#333;width:117px;text-align:center;">Rdo. Acumulado</div>
<div class="b" style="left:1351px;top:756px;width:99px;height:25.5px;background:#45b584;border-radius:0;box-shadow:inset 0 2px 3px rgba(0,0,0,0.12);"></div>
<div class="t" style="left:1351.00px;top:763.10px;font-size:12.4px;line-height:12.4px;font-weight:400;color:#fff;width:99px;text-align:center;">Rdo. Mensual</div>
<div class="b" style="left:1450px;top:756px;width:1px;height:25.5px;background:#333;"></div>
<div class="t" style="left:1450.00px;top:762.60px;font-size:13px;line-height:13px;font-weight:400;color:#333;width:66px;text-align:center;">Yield %</div>
<div class="b" style="left:13.5px;top:792px;width:1504.5px;height:210px;background:#8db5e2;"></div>
<div class="b" style="left:24px;top:804px;width:1484px;height:189px;background:#fff;"></div>
<svg class="b" style="left:0;top:0" width="1536" height="1001">
<line x1="50" y1="892.8" x2="1483" y2="892.8" stroke="#e6e6e6" stroke-width="1"/>
<line x1="50" y1="916.3" x2="1483" y2="916.3" stroke="#d0d0d0" stroke-width="1"/>
<line x1="50" y1="939.8" x2="1483" y2="939.8" stroke="#e6e6e6" stroke-width="1"/>
<line x1="50" y1="963.2" x2="1483" y2="963.2" stroke="#e6e6e6" stroke-width="1"/>
<line x1="60.0" y1="869" x2="60.0" y2="972" stroke="#e6e6e6" stroke-width="1"/>
<line x1="112.7" y1="869" x2="112.7" y2="972" stroke="#e6e6e6" stroke-width="1"/>
<line x1="165.4" y1="869" x2="165.4" y2="972" stroke="#e6e6e6" stroke-width="1"/>
<line x1="218.1" y1="869" x2="218.1" y2="972" stroke="#e6e6e6" stroke-width="1"/>
<line x1="270.8" y1="869" x2="270.8" y2="972" stroke="#e6e6e6" stroke-width="1"/>
<line x1="323.5" y1="869" x2="323.5" y2="972" stroke="#e6e6e6" stroke-width="1"/>
<line x1="376.2" y1="869" x2="376.2" y2="972" stroke="#e6e6e6" stroke-width="1"/>
<line x1="428.9" y1="869" x2="428.9" y2="972" stroke="#e6e6e6" stroke-width="1"/>
<line x1="481.6" y1="869" x2="481.6" y2="972" stroke="#e6e6e6" stroke-width="1"/>
<line x1="534.3" y1="869" x2="534.3" y2="972" stroke="#e6e6e6" stroke-width="1"/>
<line x1="587.0" y1="869" x2="587.0" y2="972" stroke="#e6e6e6" stroke-width="1"/>
<line x1="639.7" y1="869" x2="639.7" y2="972" stroke="#e6e6e6" stroke-width="1"/>
<line x1="692.4" y1="869" x2="692.4" y2="972" stroke="#e6e6e6" stroke-width="1"/>
<line x1="745.1" y1="869" x2="745.1" y2="972" stroke="#e6e6e6" stroke-width="1"/>
<line x1="797.9" y1="869" x2="797.9" y2="972" stroke="#e6e6e6" stroke-width="1"/>
<line x1="850.6" y1="869" x2="850.6" y2="972" stroke="#e6e6e6" stroke-width="1"/>
<line x1="903.3" y1="869" x2="903.3" y2="972" stroke="#e6e6e6" stroke-width="1"/>
<line x1="956.0" y1="869" x2="956.0" y2="972" stroke="#e6e6e6" stroke-width="1"/>
<line x1="1008.7" y1="869" x2="1008.7" y2="972" stroke="#e6e6e6" stroke-width="1"/>
<line x1="1061.4" y1="869" x2="1061.4" y2="972" stroke="#e6e6e6" stroke-width="1"/>
<line x1="1114.1" y1="869" x2="1114.1" y2="972" stroke="#e6e6e6" stroke-width="1"/>
<line x1="1166.8" y1="869" x2="1166.8" y2="972" stroke="#e6e6e6" stroke-width="1"/>
<line x1="1219.5" y1="869" x2="1219.5" y2="972" stroke="#e6e6e6" stroke-width="1"/>
<line x1="1272.2" y1="869" x2="1272.2" y2="972" stroke="#e6e6e6" stroke-width="1"/>
<line x1="1324.9" y1="869" x2="1324.9" y2="972" stroke="#e6e6e6" stroke-width="1"/>
<line x1="1377.6" y1="869" x2="1377.6" y2="972" stroke="#e6e6e6" stroke-width="1"/>
<line x1="1430.3" y1="869" x2="1430.3" y2="972" stroke="#e6e6e6" stroke-width="1"/>
<rect x="68.4" y="916.3" width="36" height="18.8" fill="#1bb394"/>
<rect x="121.1" y="904.6" width="36" height="11.7" fill="#1bb394"/>
<rect x="173.8" y="907.9" width="36" height="8.4" fill="#1bb394"/>
<rect x="226.5" y="904.6" width="36" height="11.7" fill="#1bb394"/>
<rect x="279.2" y="906.9" width="36" height="9.4" fill="#1bb394"/>
<rect x="331.9" y="871.2" width="36" height="45.1" fill="#1bb394"/>
<rect x="384.6" y="916.3" width="36" height="22.5" fill="#1bb394"/>
<rect x="437.3" y="906.9" width="36" height="9.4" fill="#1bb394"/>
<rect x="490.0" y="915.6" width="36" height="0.7" fill="#1bb394"/>
<rect x="542.7" y="912.3" width="36" height="4.0" fill="#1bb394"/>
<rect x="595.4" y="915.4" width="36" height="0.9" fill="#1bb394"/>
<rect x="648.1" y="915.8" width="36" height="0.6" fill="#1bb394"/>
<rect x="700.8" y="916.3" width="36" height="3.8" fill="#1bb394"/>
<rect x="753.5" y="897.1" width="36" height="19.2" fill="#1bb394"/>
<rect x="806.2" y="916.3" width="36" height="14.1" fill="#1bb394"/>
<rect x="858.9" y="916.3" width="36" height="1.6" fill="#1bb394"/>
<rect x="911.6" y="888.1" width="36" height="28.2" fill="#1bb394"/>
<rect x="964.3" y="904.6" width="36" height="11.7" fill="#1bb394"/>
<rect x="1017.0" y="886.7" width="36" height="29.6" fill="#1bb394"/>
<rect x="1069.7" y="912.3" width="36" height="4.0" fill="#1bb394"/>
<rect x="1122.4" y="906.9" width="36" height="9.4" fill="#1bb394"/>
<rect x="1175.1" y="915.6" width="36" height="0.7" fill="#1bb394"/>
<rect x="1227.8" y="887.2" width="36" height="29.1" fill="#1bb394"/>
<rect x="1280.5" y="888.1" width="36" height="28.2" fill="#1bb394"/>
<rect x="1333.2" y="911.4" width="36" height="4.9" fill="#1bb394"/>
<rect x="1385.9" y="916.3" width="36" height="10.3" fill="#1bb394"/>
<rect x="1438.6" y="906.9" width="36" height="9.4" fill="#1bb394"/>
<rect x="708" y="849" width="36" height="11" fill="#1bb394"/>
</svg>
<div class="t" style="left:749.30px;top:848.76px;font-size:10.8px;line-height:10.8px;font-weight:400;color:#666;">Rdo. Mensual</div>
<div class="t" style="left:0.00px;top:864.96px;font-size:10.4px;line-height:10.4px;font-weight:400;color:#666;width:50.2px;text-align:right;">20</div>
<div class="t" style="left:0.00px;top:888.43px;font-size:10.4px;line-height:10.4px;font-weight:400;color:#666;width:50.2px;text-align:right;">10</div>
<div class="t" style="left:0.00px;top:911.90px;font-size:10.4px;line-height:10.4px;font-weight:400;color:#666;width:50.2px;text-align:right;">0</div>
<div class="t" style="left:0.00px;top:935.37px;font-size:10.4px;line-height:10.4px;font-weight:400;color:#666;width:50.2px;text-align:right;">-10</div>
<div class="t" style="left:0.00px;top:958.84px;font-size:10.4px;line-height:10.4px;font-weight:400;color:#666;width:50.2px;text-align:right;">-20</div>
<div class="t" style="left:56.35px;top:971.83px;font-size:10.6px;line-height:10.6px;font-weight:400;color:#666;width:60px;text-align:center;">Oct-21</div>
<div class="t" style="left:109.06px;top:971.83px;font-size:10.6px;line-height:10.6px;font-weight:400;color:#666;width:60px;text-align:center;">Nov-21</div>
<div class="t" style="left:161.76px;top:971.83px;font-size:10.6px;line-height:10.6px;font-weight:400;color:#666;width:60px;text-align:center;">Dec-21</div>
<div class="t" style="left:214.46px;top:971.83px;font-size:10.6px;line-height:10.6px;font-weight:400;color:#666;width:60px;text-align:center;">Jan-22</div>
<div class="t" style="left:267.17px;top:971.83px;font-size:10.6px;line-height:10.6px;font-weight:400;color:#666;width:60px;text-align:center;">Feb-22</div>
<div class="t" style="left:319.87px;top:971.83px;font-size:10.6px;line-height:10.6px;font-weight:400;color:#666;width:60px;text-align:center;">Mar-22</div>
<div class="t" style="left:372.57px;top:971.83px;font-size:10.6px;line-height:10.6px;font-weight:400;color:#666;width:60px;text-align:center;">Apr-22</div>
<div class="t" style="left:425.28px;top:971.83px;font-size:10.6px;line-height:10.6px;font-weight:400;color:#666;width:60px;text-align:center;">May-22</div>
<div class="t" style="left:477.98px;top:971.83px;font-size:10.6px;line-height:10.6px;font-weight:400;color:#666;width:60px;text-align:center;">Jun-22</div>
<div class="t" style="left:530.69px;top:971.83px;font-size:10.6px;line-height:10.6px;font-weight:400;color:#666;width:60px;text-align:center;">Jul-22</div>
<div class="t" style="left:583.39px;top:971.83px;font-size:10.6px;line-height:10.6px;font-weight:400;color:#666;width:60px;text-align:center;">Aug-22</div>
<div class="t" style="left:636.09px;top:971.83px;font-size:10.6px;line-height:10.6px;font-weight:400;color:#666;width:60px;text-align:center;">Sep-22</div>
<div class="t" style="left:688.80px;top:971.83px;font-size:10.6px;line-height:10.6px;font-weight:400;color:#666;width:60px;text-align:center;">Oct-22</div>
<div class="t" style="left:741.50px;top:971.83px;font-size:10.6px;line-height:10.6px;font-weight:400;color:#666;width:60px;text-align:center;">Nov-22</div>
<div class="t" style="left:794.20px;top:971.83px;font-size:10.6px;line-height:10.6px;font-weight:400;color:#666;width:60px;text-align:center;">Dec-22</div>
<div class="t" style="left:846.91px;top:971.83px;font-size:10.6px;line-height:10.6px;font-weight:400;color:#666;width:60px;text-align:center;">Jan-23</div>
<div class="t" style="left:899.61px;top:971.83px;font-size:10.6px;line-height:10.6px;font-weight:400;color:#666;width:60px;text-align:center;">Feb-23</div>
<div class="t" style="left:952.31px;top:971.83px;font-size:10.6px;line-height:10.6px;font-weight:400;color:#666;width:60px;text-align:center;">Mar-23</div>
<div class="t" style="left:1005.02px;top:971.83px;font-size:10.6px;line-height:10.6px;font-weight:400;color:#666;width:60px;text-align:center;">Apr-23</div>
<div class="t" style="left:1057.72px;top:971.83px;font-size:10.6px;line-height:10.6px;font-weight:400;color:#666;width:60px;text-align:center;">May-23</div>
<div class="t" style="left:1110.43px;top:971.83px;font-size:10.6px;line-height:10.6px;font-weight:400;color:#666;width:60px;text-align:center;">Jun-23</div>
<div class="t" style="left:1163.13px;top:971.83px;font-size:10.6px;line-height:10.6px;font-weight:400;color:#666;width:60px;text-align:center;">Jul-23</div>
<div class="t" style="left:1215.83px;top:971.83px;font-size:10.6px;line-height:10.6px;font-weight:400;color:#666;width:60px;text-align:center;">Aug-23</div>
<div class="t" style="left:1268.54px;top:971.83px;font-size:10.6px;line-height:10.6px;font-weight:400;color:#666;width:60px;text-align:center;">Sep-23</div>
<div class="t" style="left:1321.24px;top:971.83px;font-size:10.6px;line-height:10.6px;font-weight:400;color:#666;width:60px;text-align:center;">Oct-23</div>
<div class="t" style="left:1373.94px;top:971.83px;font-size:10.6px;line-height:10.6px;font-weight:400;color:#666;width:60px;text-align:center;">Nov-23</div>
<div class="t" style="left:1426.65px;top:971.83px;font-size:10.6px;line-height:10.6px;font-weight:400;color:#666;width:60px;text-align:center;">Dec-23</div>
<div class="b" style="left:1515px;top:480.5px;width:1px;height:2.5px;background:#444;"></div>
<div class="b" style="left:0px;top:982px;width:1.5px;height:19px;background:#000;"></div>
<div class="b" style="left:1522px;top:982px;width:14px;height:19px;background:#000;"></div>
</body></html>
